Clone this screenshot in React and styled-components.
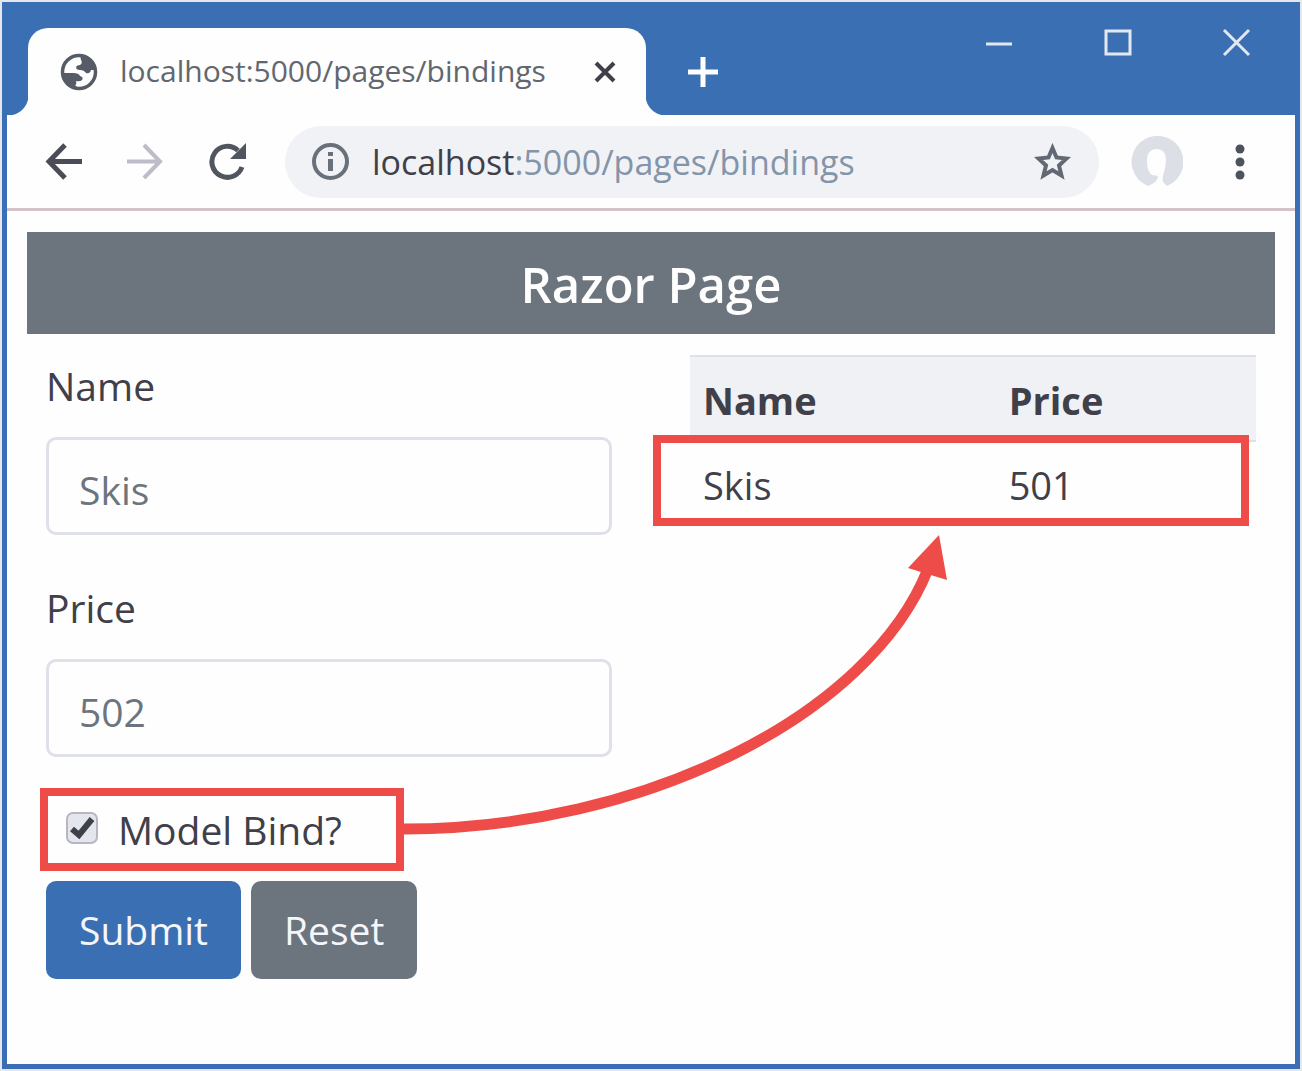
import React from "react";
import styled, { createGlobalStyle } from "styled-components";

const blue = "#3a70b3";
const gray = "#6c757d";
const red = "#ee4c49";
const ink = "#3f4049";

const GlobalStyle = createGlobalStyle`
  *, *::before, *::after { box-sizing: border-box; }
  body {
    margin: 0;
    background: #fefefe;
    color: ${ink};
    font-family: "Open Sans", "Noto Sans", sans-serif;
    font-size: 39px;
    line-height: 62px;
  }
  button, input { font: inherit; color: inherit; }
`;

const Screen = styled.div`
  display: flex;
  min-height: 100vh;
  padding: 2px;
  background: #e4e7ee;
`;

const BrowserWindow = styled.div`
  flex: 1;
  display: flex;
  flex-direction: column;
  border: 5px solid ${blue};
  background: #fefefe;
`;

const TitleBar = styled.header`
  display: flex;
  align-items: flex-start;
  padding: 21px 44px 0 21px;
  background: ${blue};
`;

const Tab = styled.div`
  position: relative;
  display: flex;
  align-items: center;
  flex: 0 1 618px;
  height: 87px;
  padding: 0 30px 0 32px;
  border-radius: 20px 20px 0 0;
  background: #fefefe;

  &::before, &::after {
    content: "";
    position: absolute;
    bottom: 0;
    width: 20px;
    height: 20px;
  }
  &::before {
    right: 100%;
    background: radial-gradient(circle at 0 0, ${blue} 20px, #fefefe 21px);
  }
  &::after {
    left: 100%;
    background: radial-gradient(circle at 100% 0, ${blue} 20px, #fefefe 21px);
  }
`;

const TabTitle = styled.span`
  flex: 1;
  margin-left: 22px;
  padding-bottom: 2px;
  color: #62676f;
  font-size: 30px;
  line-height: 40px;
  white-space: nowrap;
`;

const IconButton = styled.button`
  display: flex;
  padding: 0;
  border: 0;
  background: none;
  color: ${(p) => p.$color || ink};
`;

const NewTab = styled(IconButton)`
  height: 87px;
  margin-left: 41px;
  align-items: center;
`;

const WindowControls = styled.div`
  display: flex;
  gap: 90px;
  margin-left: auto;
`;

const Toolbar = styled.nav`
  display: flex;
  align-items: center;
  height: 96px;
  padding: 0 50px 0 38px;
  border-bottom: 3px solid #d3c3c8;
`;

const NavButtons = styled.div`
  display: flex;
  gap: 45px;
`;

const AddressBar = styled.div`
  flex: 1;
  display: flex;
  align-items: center;
  height: 72px;
  margin: 0 32px 0 39px;
  padding: 0 28px 0 27px;
  border-radius: 36px;
  background: #f1f2f6;
`;

const Url = styled.span`
  flex: 1;
  margin-left: 23px;
  color: #8494a9;
  font-size: 34px;
  line-height: 48px;
  white-space: nowrap;
`;

const Host = styled.span`
  color: ${ink};
`;

const Menu = styled(IconButton)`
  margin-left: 52px;
`;

const Page = styled.main`
  padding: 21px 20px 84px;
`;

const Heading = styled.h1`
  margin: 0;
  padding: 21px 20px 19px;
  background: ${gray};
  color: #fefefe;
  font-size: 49px;
  font-weight: 600;
  line-height: 62px;
  text-align: center;
`;

const Columns = styled.div`
  position: relative;
  display: grid;
  grid-template-columns: 1fr 1fr;
  gap: 78px;
  align-items: start;
  margin: 21px 19px 0;
`;

const Field = styled.div`
  margin-bottom: 42px;
`;

const Label = styled.label`
  display: block;
  margin-bottom: 20px;
`;

const TextInput = styled.input`
  display: block;
  width: 100%;
  height: 98px;
  padding: 6px 30px 0;
  border: 3px solid #dee1e9;
  border-radius: 10px;
  background: #fefefe;
  color: ${gray};
  outline: 0;
`;

const CheckRow = styled.div`
  position: relative;
  display: flex;
  align-items: center;
  gap: 20px;
  margin-bottom: 20px;
  padding-left: 20px;
`;

const CheckControl = styled.span`
  position: relative;
  display: flex;
  padding-bottom: 4px;
`;

const Checkbox = styled.input`
  appearance: none;
  width: 32px;
  height: 32px;
  margin: 0;
  border: 2px solid #b9b6c3;
  border-radius: 7px;
  background: #e4e6ed;
`;

const Tick = styled.svg`
  position: absolute;
  left: 0;
  top: 0;
  pointer-events: none;
`;

const Callout = styled.div`
  position: absolute;
  border: 8px solid ${red};
  pointer-events: none;
`;

const CheckCallout = styled(Callout)`
  left: -6px;
  top: -11px;
  width: 364px;
  height: 83px;
`;

const RowCallout = styled(Callout)`
  left: -37px;
  right: 7px;
  bottom: 0;
  height: 91px;
`;

const Buttons = styled.div`
  display: flex;
  gap: 10px;
`;

const Button = styled.button`
  height: 98px;
  padding: 0 33px;
  border: 0;
  border-radius: 10px;
  background: ${(p) => (p.$primary ? blue : gray)};
  color: #f4f6fa;
`;

const TableWrap = styled.div`
  position: relative;
`;

const Table = styled.table`
  width: 100%;
  border-collapse: collapse;
  font-size: 38px;
  text-align: left;

  th, td {
    height: 85px;
    padding: 2px 13px 0;
  }
  th {
    border-top: 2px solid #dee1e9;
    border-bottom: 2px solid #dee1e9;
    background: #f0f1f5;
    font-weight: 700;
  }
  th:first-child { width: 54%; }
`;

const Arrow = styled.svg`
  position: absolute;
  left: 358px;
  top: 180px;
  pointer-events: none;
`;

const Stroke = ({ size = 38, width = 4, children, ...rest }) => (
  <svg width={size} height={size} viewBox={`0 0 ${size} ${size}`} fill="none" stroke="currentColor" strokeWidth={width} aria-hidden="true" {...rest}>
    {children}
  </svg>
);

function TextField({ id, label, value }) {
  return (
    <Field>
      <Label htmlFor={id}>{label}</Label>
      <TextInput id={id} name={id} defaultValue={value} />
    </Field>
  );
}

export default function App() {
  return (
    <Screen>
      <GlobalStyle />
      <BrowserWindow>
        <TitleBar>
          <Tab>
            <svg width="38" height="38" viewBox="0 0 38 38" aria-hidden="true">
              <circle cx="19" cy="19" r="16.5" fill="#fefefe" stroke="#555c66" strokeWidth="3.5" />
              <path d="M20 2C30 2 36 10 36 17L31 17Q30 21 26 20Q24 17 20 17Q16 17 16 14Q17 12 20 12Q23 10 21 7Z" fill="#555c66" />
              <path d="M3 20L13 20Q19 20 20 23Q24 24 22 27Q20 29 16 28Q17 32 15 32L19 36C10 36 3 30 3 20Z" fill="#555c66" />
            </svg>
            <TabTitle>localhost:5000/pages/bindings</TabTitle>
            <IconButton aria-label="Close tab">
              <Stroke size={22} width={4}><path d="M2 2L20 20M20 2L2 20" /></Stroke>
            </IconButton>
          </Tab>
          <NewTab aria-label="New tab" $color="#fefefe">
            <Stroke size={32} width={5}><path d="M16 1V31M1 16H31" /></Stroke>
          </NewTab>
          <WindowControls>
            <IconButton aria-label="Minimize" $color="#e3e7f0">
              <Stroke size={29} width={3}><path d="M2 16H28" /></Stroke>
            </IconButton>
            <IconButton aria-label="Maximize" $color="#e3e7f0">
              <Stroke size={29} width={3}><path d="M3 3H27V26H3Z" /></Stroke>
            </IconButton>
            <IconButton aria-label="Close" $color="#e3e7f0">
              <Stroke size={29} width={3}><path d="M2 2L27 27M27 2L2 27" /></Stroke>
            </IconButton>
          </WindowControls>
        </TitleBar>
        <Toolbar>
          <NavButtons>
            <IconButton aria-label="Back" $color="#4a4d57">
              <Stroke size={37} width={5}><path d="M20 2L4 18.500L20 35M4 18.500H37" /></Stroke>
            </IconButton>
            <IconButton aria-label="Forward" $color="#bdbcc9">
              <Stroke size={37} width={4}><path d="M17 2L33 18.500L17 35M33 18.500H0" /></Stroke>
            </IconButton>
            <IconButton aria-label="Reload" $color="#50565f">
              <Stroke size={37} width={5}>
                <path d="M33 24A15.500 15.500 0 1 1 29 7.500" />
                <path d="M37 0V16H21Z" fill="currentColor" stroke="none" />
              </Stroke>
            </IconButton>
          </NavButtons>
          <AddressBar>
            <Stroke size={37} width={4} color="#68717b">
              <circle cx="18.500" cy="18.500" r="16.500" />
              <path d="M18.500 16V28M18.500 9V13" strokeWidth="5" />
            </Stroke>
            <Url><Host>localhost</Host>:5000/pages/bindings</Url>
            <IconButton aria-label="Bookmark" $color="#626973">
              <Stroke size={37} width={4}>
                <path d="M18.500 5L22.500 14.500L32.500 15.500L25 22.500L27.500 32.500L18.500 27L9.500 32.500L12 22.500L4.500 15.500L14.500 14.500Z" />
              </Stroke>
            </IconButton>
          </AddressBar>
          <IconButton aria-label="Profile">
            <svg width="52" height="52" viewBox="0 0 52 52" aria-hidden="true">
              <path d="M17 50A26 26 0 1 1 36 50L32 46Q31 42 33 36Q35 30 35 23Q34 13 26 13Q16 13 16 25Q16 36 21 39L27 40Q27 46 17 50Z" fill="#dddfe6" />
            </svg>
          </IconButton>
          <Menu aria-label="Menu" $color="#4d535d">
            <svg width="10" height="36" viewBox="0 0 10 36" fill="currentColor" aria-hidden="true">
              <circle cx="5" cy="5" r="4.500" /><circle cx="5" cy="18" r="4.500" /><circle cx="5" cy="31" r="4.500" />
            </svg>
          </Menu>
        </Toolbar>
        <Page>
          <Heading>Razor Page</Heading>
          <Columns>
            <form onSubmit={(e) => e.preventDefault()}>
              <TextField id="name" label="Name" value="Skis" />
              <TextField id="price" label="Price" value="502" />
              <CheckRow>
                <CheckControl>
                  <Checkbox type="checkbox" id="bind" defaultChecked />
                  <Tick width="32" height="32" viewBox="0 0 32 32" fill="none" stroke={ink} strokeWidth="6" aria-hidden="true">
                    <path d="M6 17L13 23L26 7" />
                  </Tick>
                </CheckControl>
                <label htmlFor="bind">Model Bind?</label>
                <CheckCallout />
              </CheckRow>
              <Buttons>
                <Button type="submit" $primary>Submit</Button>
                <Button type="reset">Reset</Button>
              </Buttons>
            </form>
            <TableWrap>
              <Table>
                <thead>
                  <tr><th scope="col">Name</th><th scope="col">Price</th></tr>
                </thead>
                <tbody>
                  <tr><td>Skis</td><td>501</td></tr>
                </tbody>
              </Table>
              <RowCallout />
            </TableWrap>
            <Arrow width="550" height="310" viewBox="0 0 550 310" aria-hidden="true">
              <path d="M0 294C240 294 466 180 524 34" fill="none" stroke={red} strokeWidth="11" />
              <path d="M535 0L543 45L504 33Z" fill={red} />
            </Arrow>
          </Columns>
        </Page>
      </BrowserWindow>
    </Screen>
  );
}
